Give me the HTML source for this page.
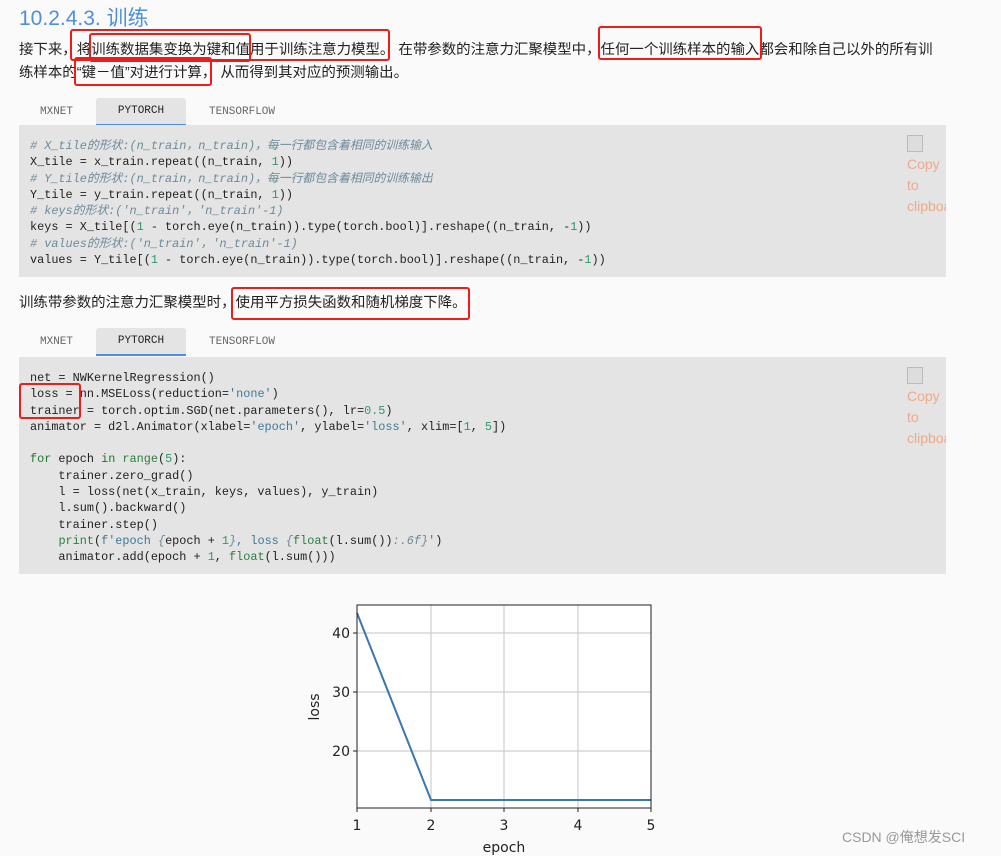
<!DOCTYPE html>
<html><head><meta charset="utf-8"><style>
body{margin:0;background:#fafafa;width:1001px;height:856px;overflow:hidden;position:relative;font-family:"Liberation Sans","Noto Sans CJK SC",sans-serif;color:#222}
.a{position:absolute;white-space:nowrap}
h1{position:absolute;left:19px;top:2px;margin:0;font-weight:normal;font-size:21px;color:#4a8fe0}
.p{font-size:14.45px;color:#222}
.tabs{position:absolute;left:19px;height:28px;font-family:"Liberation Mono",monospace;font-size:11px;color:#666}
.tabs span{position:absolute;top:8px}
.tabs .act{position:absolute;left:77px;top:0;width:90px;height:26px;background:#e4e4e4;border-bottom:2px solid #4a8fe0;color:#222;text-align:center;line-height:27px;border-radius:3px 3px 0 0}
.code{position:absolute;left:19px;width:927px;background:#e4e4e4;overflow:hidden}
pre{margin:0;position:absolute;left:11px;font-family:"Liberation Mono","Noto Sans CJK SC",monospace;font-size:11.85px;line-height:16.3px;color:#222}
.c{color:#6c8a9a;font-style:italic}.n{color:#2b9a6a}.s{color:#3a7a9a}.k{color:#1a7a2a}.b{color:#2a8040}
.copy{position:absolute;left:888px;top:10px;color:#f0a888;font-size:14px;line-height:21px}
.copy i{display:block;width:14px;height:15px;background:#ddd;border:1px solid #bbb;margin-bottom:2px}
.r{position:absolute;border:2.5px solid #f01c1c;border-radius:3px;box-sizing:border-box}
</style></head><body>
<h1>10.2.4.3. 训练</h1>
<div class="a p" style="left:19px;top:38px">接下来，将训练数据集变换为键和值用于训练注意力模型。 在带参数的注意力汇聚模型中，任何一个训练样本的输入都会和除自己以外的所有训</div>
<div class="a p" style="left:19px;top:61px">练样本的“键－值”对进行计算， 从而得到其对应的预测输出。</div>
<div class="tabs" style="top:98px;width:300px"><span style="left:21px">MXNET</span><div class="act">PYTORCH</div><span style="left:190px">TENSORFLOW</span></div>
<div class="code" style="top:125px;height:152px"><pre style="top:13px"><span class="c"># X_tile的形状:(n_train，n_train)，每一行都包含着相同的训练输入</span>
X_tile = x_train.repeat((n_train, <span class="n">1</span>))
<span class="c"># Y_tile的形状:(n_train，n_train)，每一行都包含着相同的训练输出</span>
Y_tile = y_train.repeat((n_train, <span class="n">1</span>))
<span class="c"># keys的形状:('n_train'，'n_train'-1)</span>
keys = X_tile[(<span class="n">1</span> - torch.eye(n_train)).type(torch.bool)].reshape((n_train, -<span class="n">1</span>))
<span class="c"># values的形状:('n_train'，'n_train'-1)</span>
values = Y_tile[(<span class="n">1</span> - torch.eye(n_train)).type(torch.bool)].reshape((n_train, -<span class="n">1</span>))</pre>
<div class="copy"><i></i>Copy<br>to<br>clipboard</div></div>
<div class="a p" style="left:19px;top:291px">训练带参数的注意力汇聚模型时，使用平方损失函数和随机梯度下降。</div>
<div class="tabs" style="top:328px;width:300px"><span style="left:21px">MXNET</span><div class="act">PYTORCH</div><span style="left:190px">TENSORFLOW</span></div>
<div class="code" style="top:357px;height:217px"><pre style="top:13px">net = NWKernelRegression()
loss = nn.MSELoss(reduction=<span class="s">'none'</span>)
trainer = torch.optim.SGD(net.parameters(), lr=<span class="n">0.5</span>)
animator = d2l.Animator(xlabel=<span class="s">'epoch'</span>, ylabel=<span class="s">'loss'</span>, xlim=[<span class="n">1</span>, <span class="n">5</span>])

<span class="k">for</span> epoch <span class="k">in</span> <span class="b">range</span>(<span class="n">5</span>):
    trainer.zero_grad()
    l = loss(net(x_train, keys, values), y_train)
    l.sum().backward()
    trainer.step()
    <span class="b">print</span>(<span class="s">f'epoch </span><span class="c">{</span>epoch + <span class="n">1</span><span class="c">}</span><span class="s">, loss </span><span class="c">{</span><span class="b">float</span>(l.sum())<span class="c">:.6f}</span><span class="s">'</span>)
    animator.add(epoch + <span class="n">1</span>, <span class="b">float</span>(l.sum()))</pre>
<div class="copy"><i></i>Copy<br>to<br>clipboard</div></div>
<svg class="a" style="left:0;top:0" width="1001" height="856" font-family="DejaVu Sans, sans-serif" font-size="14">
<rect x="357" y="605" width="294" height="203" fill="#fff"/>
<g stroke="#cfcfcf" stroke-width="1.2">
<line x1="431" y1="605" x2="431" y2="808"/><line x1="504" y1="605" x2="504" y2="808"/><line x1="578" y1="605" x2="578" y2="808"/>
<line x1="357" y1="633" x2="651" y2="633"/><line x1="357" y1="692" x2="651" y2="692"/><line x1="357" y1="751" x2="651" y2="751"/></g>
<polyline points="357,613 431,800 651,800" fill="none" stroke="#3a76b0" stroke-width="2"/>
<rect x="357" y="605" width="294" height="203" fill="none" stroke="#222" stroke-width="1"/>
<g stroke="#222"><line x1="353" y1="633" x2="357" y2="633"/><line x1="353" y1="692" x2="357" y2="692"/><line x1="353" y1="751" x2="357" y2="751"/>
<line x1="357" y1="808" x2="357" y2="812"/><line x1="431" y1="808" x2="431" y2="812"/><line x1="504" y1="808" x2="504" y2="812"/><line x1="578" y1="808" x2="578" y2="812"/><line x1="651" y1="808" x2="651" y2="812"/></g>
<g fill="#222" text-anchor="end"><text x="350" y="638">40</text><text x="350" y="697">30</text><text x="350" y="756">20</text></g>
<g fill="#222" text-anchor="middle"><text x="357" y="830">1</text><text x="431" y="830">2</text><text x="504" y="830">3</text><text x="578" y="830">4</text><text x="651" y="830">5</text>
<text x="504" y="852">epoch</text><text transform="translate(319,707) rotate(-90)">loss</text></g>
<text x="842" y="842" fill="#999" font-family="Liberation Sans, Noto Sans CJK SC, sans-serif" font-size="14">CSDN @俺想发SCI</text>
</svg>
<div class="r" style="left:70px;top:29px;width:320px;height:32px"></div>
<div class="r" style="left:89px;top:33px;width:162px;height:29px"></div>
<div class="r" style="left:74px;top:57px;width:138px;height:29px"></div>
<div class="r" style="left:598px;top:26px;width:164px;height:34px"></div>
<div class="r" style="left:231px;top:287px;width:239px;height:33px"></div>
<div class="r" style="left:19px;top:383px;width:62px;height:36px"></div>
</body></html>
